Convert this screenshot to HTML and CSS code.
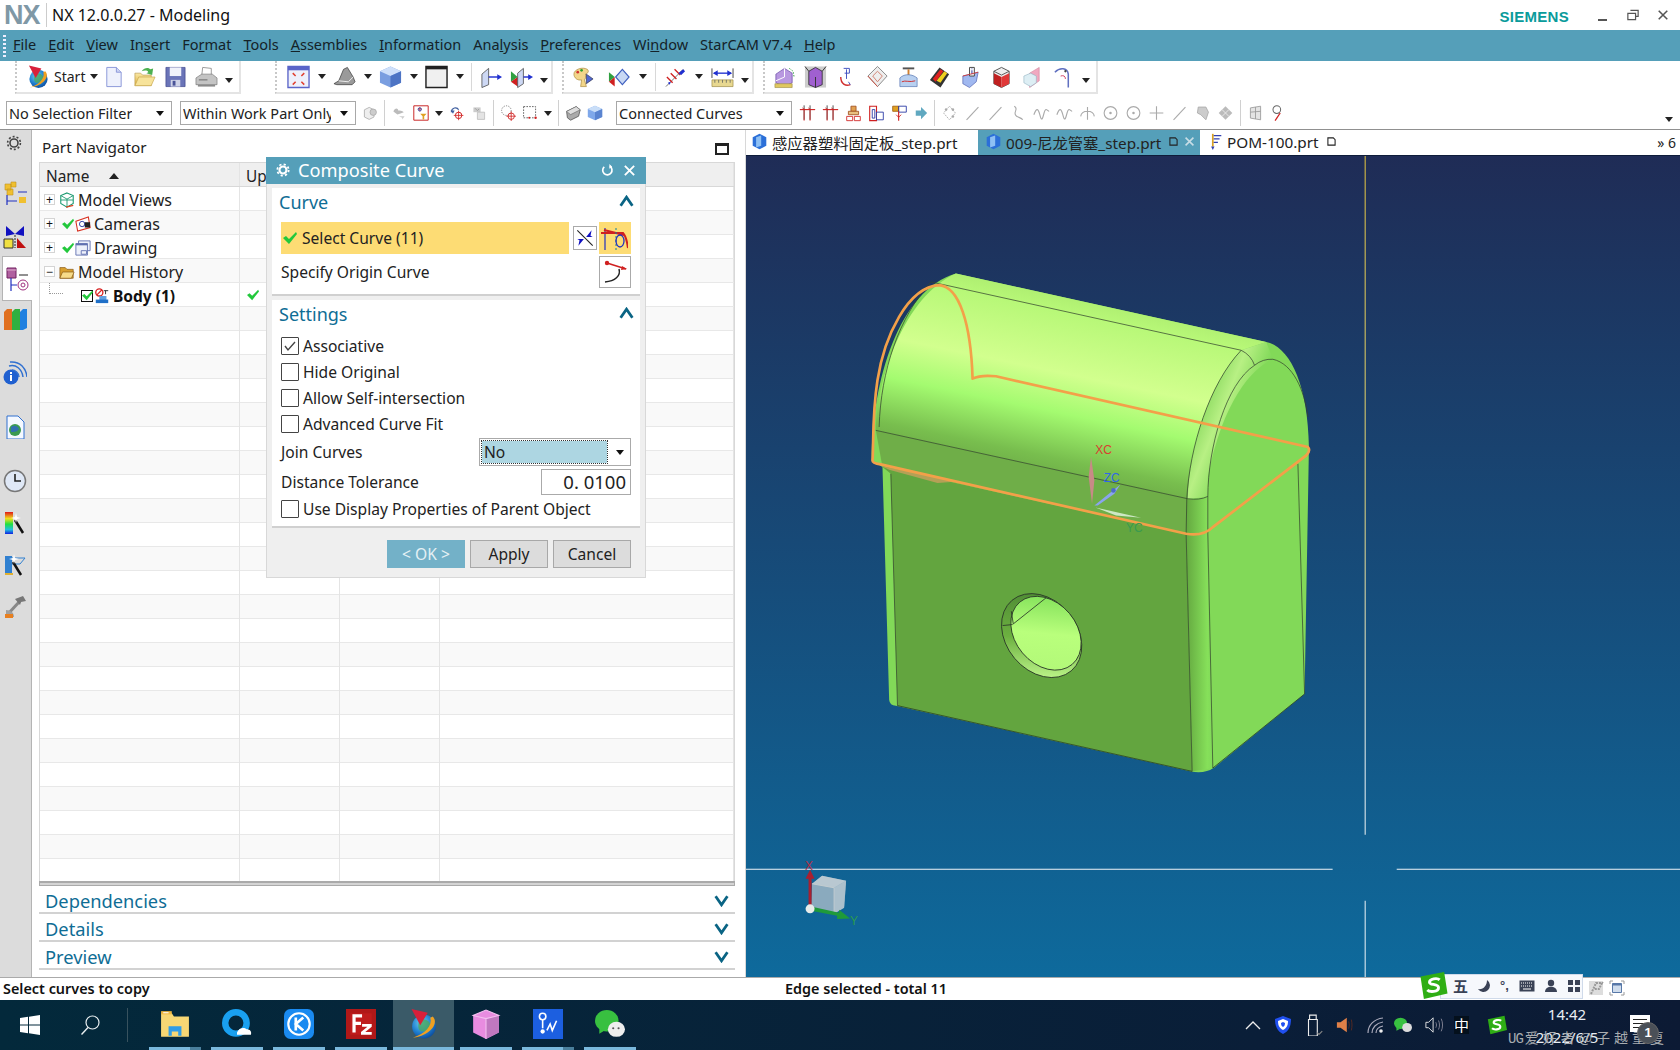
FILE: index.html
```html
<!DOCTYPE html>
<html lang="en">
<head>
<meta charset="utf-8">
<title>NX 12.0.0.27 - Modeling</title>
<link rel="stylesheet" href="styles.css">
</head>
<body>
<svg class="defs" width="0" height="0">
<defs>
<linearGradient id="gBlue" x1="0" y1="0" x2="1" y2="1"><stop offset="0" stop-color="#dfe6fb"/><stop offset="1" stop-color="#6f86d8"/></linearGradient>
<linearGradient id="gGold" x1="0" y1="0" x2="0" y2="1"><stop offset="0" stop-color="#fbe9a6"/><stop offset="1" stop-color="#dcae3c"/></linearGradient>
<radialGradient id="gGlobe" cx=".4" cy=".35" r=".7"><stop offset="0" stop-color="#6fd0f0"/><stop offset=".6" stop-color="#1f7fd0"/><stop offset="1" stop-color="#0c4a9a"/></radialGradient>
<linearGradient id="gRainbow" x1="0" y1="0" x2="0" y2="1"><stop offset="0" stop-color="#e01818"/><stop offset=".3" stop-color="#f0e020"/><stop offset=".55" stop-color="#20e040"/><stop offset=".8" stop-color="#20c0e0"/><stop offset="1" stop-color="#1020e0"/></linearGradient>
<symbol id="globe" viewBox="0 0 24 24"><circle cx="12" cy="14" r="9.500" fill="url(#gGlobe)"/><path d="M8 9c3-2 8 0 9 3s-2 6-6 6-4-4-3-9z" fill="#4aa860" opacity=".8"/><path d="M19 6c5 5-1 15-16 17 10-3 16-10 14-16z" fill="#f0a020"/><path d="M2 0l13 3-6 10z" fill="#d8203a"/></symbol>
<symbol id="doc" viewBox="0 0 24 24"><path d="M5 2h10l5 5v15H5z" fill="#eef1fc" stroke="#8a96d8"/><path d="M15 2v5h5" fill="#cdd5f4" stroke="#8a96d8"/></symbol>
<symbol id="open" viewBox="0 0 24 24"><path d="M2 21V8h6l2 2h9v11z" fill="url(#gGold)" stroke="#b89a50" stroke-width=".7"/><path d="M2 21l4-9h17l-4 9z" fill="#f7e39a" stroke="#c8a850" stroke-width=".7"/><path d="M9 6c3-4 7-4 9-2l3-1-1 7-6-2 2-1c-1-2-4-2-7-1z" fill="#4cb050"/></symbol>
<symbol id="save" viewBox="0 0 24 24"><path d="M2 2h20v20H2z" fill="#6a74b8" stroke="#3c4488" stroke-width=".7"/><path d="M6 2h12v9H6z" fill="#f0f2fa"/><path d="M7 15h10v7H7z" fill="#cfd3e8"/><path d="M9 16h3v5H9z" fill="#4a5498"/></symbol>
<symbol id="print" viewBox="0 0 24 24"><path d="M8 2l9 1v8H7z" fill="#fff" stroke="#999"/><path d="M1 13l6-4h11l5 4v7H1z" fill="#c4c4c4" stroke="#777" stroke-width=".7"/><path d="M3 20h18v2H3z" fill="#8a8a8a"/><path d="M4 15h9" stroke="#666"/></symbol>
<symbol id="fit" viewBox="0 0 24 24"><path d="M1 1h22v22H1z" fill="#eef0fb" stroke="#5a64c8" stroke-width="1.400"/><path d="M1 1h22v4H1z" fill="#5a64c8"/><path d="M6 8l3 3M18 8l-3 3M6 20l3-3M18 20l-3-3" stroke="#e04030" stroke-width="1.600"/></symbol>
<symbol id="shade" viewBox="0 0 24 24"><path d="M1 19l5-3 5-12 4-2 6 10 2 5-3 3H4z" fill="#9a9a9a" stroke="#444" stroke-width=".8"/><path d="M6 16l10 1 5-5" stroke="#eee" fill="none"/></symbol>
<symbol id="cube" viewBox="0 0 24 24"><path d="M12 1l11 5v12l-11 5-11-5V6z" fill="#7a9ee0"/><path d="M1 6l11 5 11-5-11-5z" fill="#cfe0fa"/><path d="M12 11v12l11-5V6z" fill="#4d74c4"/></symbol>
<symbol id="win" viewBox="0 0 24 24"><path d="M1 1h22v22H1z" fill="#f0f0f0" stroke="#222" stroke-width="1.500"/><path d="M1 1h22v3H1z" fill="#222"/></symbol>
<symbol id="plane" viewBox="0 0 24 24"><path d="M2 9l7-6v17l-7 3z" fill="#cdd8f4" stroke="#444" stroke-width=".8"/><path d="M9 12h12" stroke="#2030d0" stroke-width="1.500"/><path d="M23 12l-5-3v6z" fill="#2030d0"/></symbol>
<symbol id="plane2" viewBox="0 0 24 24"><path d="M1 6l7 6-7 5z" fill="#30a040"/><path d="M1 17l7-5v10z" fill="#d02020"/><path d="M8 8l6-5v16l-6 4z" fill="#cdd8f4" stroke="#444" stroke-width=".8"/><path d="M14 12h8" stroke="#2030d0" stroke-width="1.500"/><path d="M24 12l-5-3v6z" fill="#2030d0"/></symbol>
<symbol id="palette" viewBox="0 0 24 24"><path d="M2 9c0-5 9-8 14-5 2 2 1 4-2 5 1 2 0 5-1 6l2 7H9l1-7c-4 1-8-2-8-6z" fill="#f2d68a" stroke="#a8873c" stroke-width=".7"/><circle cx="6" cy="7" r="1.400" fill="#d03030"/><circle cx="10" cy="5" r="1.400" fill="#30a030"/><path d="M15 9l7 5-7 5z" fill="#5068d0" stroke="#223" stroke-width=".6"/></symbol>
<symbol id="wcsv" viewBox="0 0 24 24"><path d="M1 7l6 5-6 5z" fill="#30a040"/><path d="M1 17l6-5v10z" fill="#d02020"/><path d="M8 12l7-8 7 8-7 8z" fill="#c8d8f4" stroke="#4060c0" stroke-width="1.200"/></symbol>
<symbol id="wcs" viewBox="0 0 24 24"><path d="M2 22L20 4" stroke="#333" stroke-width=".7"/><path d="M3 12l6 6M7 8l6 6M11 4l6 6" stroke="#d02020" stroke-width="1.400"/><path d="M15 8l5-4 2 2-4 4z" fill="#2030d0"/><path d="M4 18l3-1-1 3z" fill="#2030d0"/></symbol>
<symbol id="ruler" viewBox="0 0 24 24"><path d="M1 3v10M23 3v10" stroke="#444"/><path d="M3 8h18" stroke="#2030d0" stroke-width="1.400"/><path d="M2 8l5-3v6zM22 8l-5-3v6z" fill="#2030d0"/><path d="M1 15h22v7H1z" fill="#e8d890" stroke="#9a8840" stroke-width=".7"/><path d="M4 15v3M8 15v3M12 15v3M16 15v3M20 15v3" stroke="#776"/></symbol>
<symbol id="a1" viewBox="0 0 24 24"><path d="M3 9l9-6 8 5v10l-8 4-9-4z" fill="#b898e0" stroke="#6040a0" stroke-width=".7"/><path d="M12 3v9l-9 4" stroke="#fff" fill="none"/><path d="M17 3l4 3 1 6" stroke="#30a040" stroke-dasharray="1.500 1.500" fill="none"/><path d="M2 19h18v4H2z" fill="#e0c860" stroke="#9a8840" stroke-width=".6"/></symbol>
<symbol id="a2" viewBox="0 0 24 24"><path d="M1 1h22v22H1z" fill="#ccc"/><path d="M5 6l7-4 7 4v14l-7 3-7-3z" fill="#a060d0" stroke="#222" stroke-width=".8"/><path d="M1 1l4 5M23 1l-4 5M12 23v-11" stroke="#333"/></symbol>
<symbol id="a3" viewBox="0 0 24 24"><path d="M6 12c0 7 5 10 10 8" stroke="#d03030" stroke-width="1.500" fill="none"/><path d="M12 14V4M16 20l-2-3" stroke="#4050c0" fill="none"/><path d="M9 3h6v5h-5" stroke="#4050c0" fill="none"/></symbol>
<symbol id="a4" viewBox="0 0 24 24"><path d="M12 1l10 10-10 11L2 11z" fill="#eee" stroke="#888"/><path d="M12 6l5 5-5 6-5-6z" fill="none" stroke="#d08070"/><path d="M2 11l10 11" stroke="#d05040"/></symbol>
<symbol id="a5" viewBox="0 0 24 24"><path d="M6 2h12v2H6z" fill="#555"/><path d="M12 4v7" stroke="#d08030" stroke-width="2"/><path d="M3 13c5-5 13-4 18 0v9H3z" fill="#b8d0f0" stroke="#5070b0" stroke-width=".7"/><path d="M5 17c4-2 8 1 14-1" stroke="#d03030" fill="none"/></symbol>
<symbol id="a6" viewBox="0 0 24 24"><path d="M2 15L12 2l10 7-9 14z" fill="#333"/><path d="M5 14l8-10 3 2-8 11z" fill="#e02020"/><path d="M9 16l8-10 3 2-7 10z" fill="#f0d020"/></symbol>
<symbol id="a7" viewBox="0 0 24 24"><path d="M4 11l16-4-2 10-7 6-7-4z" fill="#a0b8f0" stroke="#5060b0" stroke-width=".7"/><path d="M11 2h5v9h-5z" fill="#fff" stroke="#444"/><path d="M13 3h1v1h-1zM13 5h1v4h-1z" fill="#2030a0"/><path d="M4 11l16-4" stroke="#d04040"/></symbol>
<symbol id="a8" viewBox="0 0 24 24"><path d="M4 6l8-4 8 4v13l-8 4-8-4z" fill="#eee" stroke="#555"/><path d="M4 8l8 4v11l-8-4z" fill="#c02020"/><path d="M12 12l8-4v11l-8 4z" fill="#e03838"/><path d="M4 6l8 4 8-4" stroke="#555" fill="none"/></symbol>
<symbol id="a9" viewBox="0 0 24 24"><path d="M9 8l10-6v14L9 23z" fill="#f0a8c0" stroke="#d08098" stroke-width=".6"/><path d="M3 11l7-3 6 3v7l-6 4-7-4z" fill="#ddeef4" stroke="#90b0c0" stroke-width=".6"/></symbol>
<symbol id="a10" viewBox="0 0 24 24"><path d="M3 7c5-5 13-5 14 2v14" stroke="#6070c0" stroke-width="1.600" fill="none"/><path d="M9 11c3-1 5 0 5 3" stroke="#d04060" fill="none"/><circle cx="14" cy="6" r="1.200" fill="#444"/></symbol>
<symbol id="g1" viewBox="0 0 20 20"><path d="M3 6l6-3 6 3v9l-6 3-6-3z" fill="#eee" stroke="#aaa"/><circle cx="14" cy="9" r="4" fill="#ccc" stroke="#aaa"/></symbol>
<symbol id="g2" viewBox="0 0 20 20"><path d="M3 8c2-5 6-4 6-1 2 0 5 0 7 2l-5 2-3 1z" fill="#bbb"/><path d="M10 14h7l-3 4v-2z" fill="#ccc"/></symbol>
<symbol id="filt" viewBox="0 0 20 20"><path d="M1 1h18v18H1z" fill="#fff" stroke="#c82020" stroke-width="1.200"/><path d="M6 5h5M8.500 3v5" stroke="#c03030"/><circle cx="8.500" cy="5.500" r="2" fill="none" stroke="#2030a0"/><path d="M9 11h8l-3 3v4h-2v-4z" fill="#e0a020"/></symbol>
<symbol id="tgt" viewBox="0 0 20 20"><path d="M3 9c0-6 7-7 9-3" stroke="#4060a0" stroke-width="1.600" fill="none"/><path d="M2 7l3 4 2-4z" fill="#4060a0"/><circle cx="12" cy="13" r="4" fill="none" stroke="#d02020" stroke-width="1.200"/><path d="M12 7v12M6 13h12" stroke="#d02020"/></symbol>
<symbol id="g3" viewBox="0 0 20 20"><path d="M3 3h9v6H3z" fill="#ccc"/><path d="M8 9h9v9H8z" fill="#e4e4e4" stroke="#bbb"/><path d="M5 4l3 3 2-2" stroke="#999" fill="none"/></symbol>
<symbol id="circt" viewBox="0 0 20 20"><circle cx="8" cy="7" r="6" fill="none" stroke="#666" stroke-dasharray="1.500 1.500"/><circle cx="14" cy="14" r="4" fill="none" stroke="#d02020" stroke-width="1.100"/><path d="M14 8v12M8 14h12" stroke="#d02020"/></symbol>
<symbol id="rectd" viewBox="0 0 20 20"><path d="M2 2h15v14H2z" fill="none" stroke="#444" stroke-dasharray="2 1.500"/><circle cx="17" cy="16" r="1.500" fill="#d02020"/><circle cx="9" cy="16" r="1.200" fill="#d02020"/></symbol>
<symbol id="sh1" viewBox="0 0 20 20"><path d="M2 8l12-6 5 4-2 8-10 5-4-3z" fill="#aaa" stroke="#555"/><path d="M2 8l12-6 5 4-12 6z" fill="#ddd" stroke="#555" stroke-width=".6"/></symbol>
<symbol id="sh2" viewBox="0 0 20 20"><path d="M10 1l9 4v10l-9 4-9-4V5z" fill="#7fa8ea"/><path d="M1 5l9 4 9-4-9-4z" fill="#c9def8"/><path d="M10 9v10l9-4V5z" fill="#5a84d0"/></symbol>
<symbol id="rr" viewBox="0 0 20 20"><path d="M6 1v17M13 1v17" stroke="#333"/><path d="M1 6h18" stroke="#d02020" stroke-width="1.300"/><path d="M4 4c1 1 2 1 3 2M11 4c1 1 2 1 3 2" stroke="#d02020"/><path d="M6 6v13M13 6v13" stroke="#d02020"/></symbol>
<symbol id="rs" viewBox="0 0 20 20"><path d="M7 2h6v6H7z" fill="#e0a050" stroke="#a05020"/><path d="M4 8h12v4H4z" fill="#e8c080" stroke="#a05020"/><path d="M2 14h7v5H2zM11 14h7v5h-7z" fill="none" stroke="#d02020"/></symbol>
<symbol id="rb" viewBox="0 0 20 20"><path d="M2 2h8v17H2z" fill="#fff" stroke="#d02020" stroke-width="1.300"/><path d="M5 6h3v10H5z" fill="none" stroke="#2030a0"/><path d="M10 9h8v9h-8z" fill="#fff" stroke="#2030a0"/></symbol>
<symbol id="rl" viewBox="0 0 20 20"><path d="M2 2h7v6H2z" fill="#e0a020" stroke="#a06010"/><path d="M9 2h9v7H9z" fill="none" stroke="#2030a0"/><path d="M9 8v11" stroke="#d02020" stroke-width="1.300"/><path d="M6 12l3 3 3-3" fill="none" stroke="#d02020"/></symbol>
<symbol id="arr" viewBox="0 0 16 16"><path d="M2 5h6V1l7 7-7 7v-4H2z" fill="#60a8c0"/></symbol>
<symbol id="gs" viewBox="0 0 20 20"><path d="M10 2l7 8-7 8-7-8z" fill="none" stroke="#aaa" stroke-dasharray="2 1"/><circle cx="6" cy="6" r="1.500" fill="#aaa"/><circle cx="14" cy="14" r="1.500" fill="#aaa"/><circle cx="14" cy="6" r="1.500" fill="#aaa"/></symbol>
<symbol id="gl" viewBox="0 0 20 20"><path d="M3 18L17 3" stroke="#aaa" stroke-width="1.300"/></symbol>
<symbol id="gw" viewBox="0 0 20 20"><path d="M5 2c6 3-2 7 2 11 3 3 6 2 8 5" fill="none" stroke="#aaa" stroke-width="1.300"/></symbol>
<symbol id="gv" viewBox="0 0 20 20"><path d="M1 12c3-8 5-8 7 0s3 6 5-2 4-2 6-2" fill="none" stroke="#aaa" stroke-width="1.300"/></symbol>
<symbol id="gt" viewBox="0 0 20 20"><path d="M2 14c1-8 15-8 16 0M10 3v15" fill="none" stroke="#aaa" stroke-width="1.300"/></symbol>
<symbol id="gc" viewBox="0 0 20 20"><circle cx="10" cy="10" r="7.500" fill="none" stroke="#aaa" stroke-width="1.300"/><circle cx="10" cy="10" r="1.500" fill="#aaa"/></symbol>
<symbol id="gp" viewBox="0 0 20 20"><path d="M10 2v16M2 10h16" stroke="#aaa" stroke-width="1.300"/></symbol>
<symbol id="gq" viewBox="0 0 20 20"><path d="M5 3h9l3 6-3 9-6-6-4-2z" fill="#ccc" stroke="#aaa"/></symbol>
<symbol id="gd" viewBox="0 0 20 20"><path d="M10 2l8 8-8 8-8-8z" fill="#bbb"/><path d="M6 6l8 8M14 6l-8 8" stroke="#eee"/></symbol>
<symbol id="gb" viewBox="0 0 20 20"><path d="M4 4l12-2v16L4 16z" fill="#e4e4e4" stroke="#999"/><path d="M4 9l12-1M10 3v14" stroke="#999"/></symbol>
<symbol id="gr" viewBox="0 0 20 20"><circle cx="8" cy="6" r="4.500" fill="none" stroke="#666" stroke-width="1.200"/><path d="M12 10L6 19" stroke="#d02020" stroke-width="1.500"/></symbol>
<symbol id="solid" viewBox="0 0 20 20"><path d="M10 1l8 4v10l-8 4-8-4V5z" fill="#2b6fd8"/><path d="M6 5l6-2v12l-6 2z" fill="#8ec0f4"/></symbol>
<symbol id="chk" viewBox="0 0 16 14"><path d="M1 7l3-2 3 3 7-7 1 2-8 10z" fill="#22c83c"/></symbol>
<symbol id="cl" viewBox="0 0 14 14"><path d="M2 2l10 10M12 2L2 12" stroke="#555" stroke-width="1.800"/></symbol>
</defs>
</svg>

<header class="titlebar">
  <span class="logo">NX</span>
  <span class="logosep"></span>
  <span class="title">NX 12.0.0.27 - Modeling</span>
  <span class="siemens">SIEMENS</span>
  <span class="winctl"><span class="minbtn"></span>
    <svg class="ctl" viewBox="0 0 14 14"><path d="M4 1.500h9v7H10M1 5h9v7.500H1z" fill="none" stroke="#555" stroke-width="1.400"/></svg>
    <svg class="ctl"><use href="#cl"/></svg></span>
</header>

<nav class="menubar">
  <span class="grip"></span>
  <span class="m"><u>F</u>ile</span><span class="m"><u>E</u>dit</span><span class="m"><u>V</u>iew</span><span class="m">In<u>s</u>ert</span><span class="m">Fo<u>r</u>mat</span><span class="m"><u>T</u>ools</span><span class="m"><u>A</u>ssemblies</span><span class="m"><u>I</u>nformation</span><span class="m">Ana<u>l</u>ysis</span><span class="m"><u>P</u>references</span><span class="m">Wi<u>n</u>dow</span><span class="m">StarCAM V7.4</span><span class="m"><u>H</u>elp</span>
</nav>

<div class="toolbar">
  <div class="tgroup g1">
    <svg class="i"><use href="#globe"/></svg><span class="start">Start</span><i class="caret tight"></i>
    <svg class="i first"><use href="#doc"/></svg><svg class="i"><use href="#open"/></svg><svg class="i"><use href="#save"/></svg><svg class="i"><use href="#print"/></svg><i class="caret low"></i>
  </div>
  <div class="tgroup g2">
    <svg class="i"><use href="#fit"/></svg><i class="caret"></i><svg class="i"><use href="#shade"/></svg><i class="caret"></i><svg class="i"><use href="#cube"/></svg><i class="caret"></i><svg class="i"><use href="#win"/></svg><i class="caret"></i><span class="vsep"></span><svg class="i"><use href="#plane"/></svg><svg class="i"><use href="#plane2"/></svg><i class="caret low"></i>
  </div>
  <div class="tgroup g3">
    <svg class="i pal"><use href="#palette"/></svg><svg class="i"><use href="#wcsv"/></svg><i class="caret"></i><span class="vsep"></span><svg class="i"><use href="#wcs"/></svg><i class="caret"></i><svg class="i"><use href="#ruler"/></svg><i class="caret low"></i>
  </div>
  <div class="tgroup g4">
    <svg class="i"><use href="#a1"/></svg><svg class="i"><use href="#a2"/></svg><svg class="i"><use href="#a3"/></svg><svg class="i"><use href="#a4"/></svg><svg class="i"><use href="#a5"/></svg><svg class="i"><use href="#a6"/></svg><svg class="i"><use href="#a7"/></svg><svg class="i"><use href="#a8"/></svg><svg class="i"><use href="#a9"/></svg><svg class="i"><use href="#a10"/></svg><i class="caret low"></i>
  </div>
</div>

<div class="selbar">
  <div class="combo c1"><span class="cv">No Selection Filter</span><i class="caret dk"></i></div>
  <div class="combo c2"><span class="cv">Within Work Part Only</span><i class="caret dk"></i></div>
  <svg class="s"><use href="#g1"/></svg><span class="vsep2"></span>
  <svg class="s"><use href="#g2"/></svg><svg class="s"><use href="#filt"/></svg><i class="caret"></i><svg class="s"><use href="#tgt"/></svg><svg class="s"><use href="#g3"/></svg><span class="vsep2"></span>
  <svg class="s"><use href="#circt"/></svg><svg class="s"><use href="#rectd"/></svg><i class="caret"></i><span class="vsep2"></span>
  <svg class="s"><use href="#sh1"/></svg><svg class="s"><use href="#sh2"/></svg>
  <div class="combo c3"><span class="cv">Connected Curves</span><i class="caret dk"></i></div>
  <svg class="s"><use href="#rr"/></svg><svg class="s"><use href="#rr"/></svg><svg class="s"><use href="#rs"/></svg><svg class="s"><use href="#rb"/></svg><svg class="s"><use href="#rl"/></svg><svg class="s sm"><use href="#arr"/></svg><span class="vsep2"></span>
  <svg class="s"><use href="#gs"/></svg><svg class="s"><use href="#gl"/></svg><svg class="s"><use href="#gl"/></svg><svg class="s"><use href="#gw"/></svg><svg class="s"><use href="#gv"/></svg><svg class="s"><use href="#gv"/></svg><svg class="s"><use href="#gt"/></svg><svg class="s"><use href="#gc"/></svg><svg class="s"><use href="#gc"/></svg><svg class="s"><use href="#gp"/></svg><svg class="s"><use href="#gl"/></svg><svg class="s"><use href="#gq"/></svg><svg class="s"><use href="#gd"/></svg><span class="vsep2"></span>
  <svg class="s"><use href="#gb"/></svg><svg class="s"><use href="#gr"/></svg>
  <i class="caret end"></i>
</div>

<main class="main">
  <aside class="strip">
    <svg class="sg" viewBox="0 0 20 20"><circle cx="10" cy="10" r="5" fill="none" stroke="#444" stroke-width="2"/><circle cx="10" cy="10" r="8" fill="none" stroke="#444" stroke-width="2" stroke-dasharray="2.500 2.500"/></svg>
    <svg class="si near" viewBox="0 0 24 24"><path d="M2 3h6v6H2zM8 1h5v5H8zM4 8h6v6H4z" fill="#f0c030" stroke="#c09020" stroke-width=".6"/><path d="M4 14v10M4 20h10M15 11h9" stroke="#2030c0" stroke-width="1.200"/><path d="M16 16h7v6h-7z" fill="#f0c030"/></svg>
    <svg class="si" viewBox="0 0 24 24"><path d="M3 1l9 8 9-8v10l-9-2-9 2z" fill="#1010c0"/><path d="M12 10v13" stroke="#222" stroke-dasharray="2 1"/><path d="M1 14h9v9H1z" fill="#f0e040" stroke="#333"/><path d="M14 23V13l9 10z" fill="#c01010"/></svg>
    <div class="stab"><svg class="si" viewBox="0 0 24 24"><path d="M2 1h9v10H2z" fill="#b060a0" stroke="#702060"/><path d="M2 3h9" stroke="#e0b0d0"/><path d="M6 11v13M6 18h6" stroke="#2030c0" stroke-width="1.200"/><path d="M14 8h9" stroke="#222"/><circle cx="18" cy="18" r="5" fill="none" stroke="#a03080"/><circle cx="18" cy="18" r="2" fill="none" stroke="#a03080"/></svg></div>
    <svg class="si far" viewBox="0 0 24 24"><path d="M1 5l3-3h5v21H1z" fill="#e07020"/><path d="M9 5l3-3h5v21H9z" fill="#30b040"/><path d="M17 5l3-3h4v19l-4 2h-3z" fill="#2080e0"/></svg>
    <svg class="si far" viewBox="0 0 24 24"><circle cx="8" cy="16" r="7.500" fill="#2060d0"/><path d="M7 11h2v2H7zM7 14h2v6H7z" fill="#fff"/><path d="M6 5c7-2 13 3 14 11M7 1c10-1 16 6 17 15M9 9c3 0 7 3 7 7" fill="none" stroke="#3070d0" stroke-width="1.500"/></svg>
    <svg class="si far" viewBox="0 0 24 24"><path d="M4 1h11l6 6v17H4z" fill="#f4f8ff" stroke="#3070d0"/><circle cx="12" cy="15" r="6" fill="#3a9a50"/><path d="M8 12c3-2 6-2 8 2-2 3-5 3-8 3z" fill="#3070b0"/></svg>
    <svg class="si" viewBox="0 0 24 24"><circle cx="12" cy="12" r="10.500" fill="#dfe8f6" stroke="#777" stroke-width="1.500"/><path d="M12 5v7h6" stroke="#222" stroke-width="1.600" fill="none"/></svg>
    <svg class="si" viewBox="0 0 24 24"><path d="M2 1h8v22H2z" fill="url(#gRainbow)"/><path d="M12 9l8 13" stroke="#111" stroke-width="2.500"/><path d="M12 6l1-4 1 4 4 1-4 1-1 4-1-4-4-1z" fill="#fff"/></svg>
    <svg class="si" viewBox="0 0 24 24"><path d="M2 3h7v18H2z" fill="#3080d0"/><path d="M9 5h13l-5 6h-8" fill="none" stroke="#3080d0"/><path d="M10 9l8 13" stroke="#111" stroke-width="2.500"/><path d="M10 5l1-4 1 4 4 1-4 1-1 4-1-4-4-1z" fill="#fff"/><path d="M2 21h8" stroke="#e0b030" stroke-width="2"/></svg>
    <svg class="si" viewBox="0 0 24 24"><path d="M4 20L17 6" stroke="#888" stroke-width="3"/><path d="M12 4l8-3 3 5-5 1-1 3z" fill="#777"/><path d="M3 15c5 0 8 3 8 7H3z" fill="#a0a0a0"/><path d="M2 19h8v4H2z" fill="#e88020"/></svg>
  </aside>

  <section class="nav">
    <div class="navhead"><span class="navtitle">Part Navigator</span><span class="navpin"></span></div>
    <div class="table">
      <div class="row head"><span class="cell namecell">Name<i class="sortup"></i></span><span class="cell">Up</span><span class="cell"></span><span class="cell"></span></div>
      <div class="row"><span class="cell namecell tree"><b class="box">+</b><svg class="ti" viewBox="0 0 18 18"><path d="M9 1l7 3v9l-7 4-7-4V4z" fill="none" stroke="#1a9a70" stroke-width="1.200"/><path d="M2 4l7 4 7-4M9 8v9M2 9h14" stroke="#1a9a70" fill="none"/><path d="M8 17l8-2" stroke="#e04020" stroke-width="1.300"/></svg>Model Views</span><span class="cell"></span><span class="cell"></span><span class="cell"></span></div>
      <div class="row alt"><span class="cell namecell tree"><b class="box">+</b><svg class="ck"><use href="#chk"/></svg><svg class="ti" viewBox="0 0 18 18"><path d="M1 6l14-5 2 12-14 4z" fill="#fff" stroke="#d83020" stroke-width="1.200"/><circle cx="8" cy="9" r="3" fill="none" stroke="#2030a0"/><path d="M11 7h6v6h-6z" fill="#222"/></svg>Cameras</span><span class="cell"></span><span class="cell"></span><span class="cell"></span></div>
      <div class="row"><span class="cell namecell tree"><b class="box">+</b><svg class="ck"><use href="#chk"/></svg><svg class="ti" viewBox="0 0 18 18"><path d="M4 1h13v11H4z" fill="#eef1fb" stroke="#6070b0"/><path d="M1 4h13v13H1z" fill="#eef1fb" stroke="#6070b0"/><path d="M1 4h13v2H1z" fill="#6070b0"/><path d="M7 12h6v4H7z" fill="none" stroke="#6070b0"/></svg>Drawing</span><span class="cell"></span><span class="cell"></span><span class="cell"></span></div>
      <div class="row alt"><span class="cell namecell tree"><b class="box">&#8722;</b><svg class="ti" viewBox="0 0 18 18"><path d="M1 16V4h6l2 2h7v10z" fill="#d8a030" stroke="#805010" stroke-width=".7"/><path d="M1 16l3-7h13l-3 7z" fill="#f7dc8a" stroke="#805010" stroke-width=".7"/></svg>Model History</span><span class="cell"></span><span class="cell"></span><span class="cell"></span></div>
      <div class="row"><span class="cell namecell tree body"><i class="dots"></i><span class="tick"><svg class="ck2"><use href="#chk"/></svg></span><svg class="ti" viewBox="0 0 18 18"><circle cx="6" cy="5" r="4" fill="none" stroke="#d82020" stroke-width="1.500"/><path d="M3 8l6-6" stroke="#d82020" stroke-width="1.300"/><path d="M11 3h5M13 3v4" stroke="#222"/><path d="M6 9h8v5H6z" fill="#60a0e0"/><path d="M2 13h14v4H2z" fill="#2070c8"/></svg>Body (1)</span><span class="cell"><svg class="ck"><use href="#chk"/></svg></span><span class="cell"></span><span class="cell"></span></div>
      <div class="filler"><span></span><span></span><span></span><span></span></div>
    </div>
    <div class="splitter"></div>
    <div class="fold"><span>Dependencies</span><svg class="chev" viewBox="0 0 14 12"><path d="M1.500 2L7 10l5.500-8" fill="none" stroke="#0a6484" stroke-width="2.600"/></svg></div>
    <div class="fold"><span>Details</span><svg class="chev" viewBox="0 0 14 12"><path d="M1.500 2L7 10l5.500-8" fill="none" stroke="#0a6484" stroke-width="2.600"/></svg></div>
    <div class="fold"><span>Preview</span><svg class="chev" viewBox="0 0 14 12"><path d="M1.500 2L7 10l5.500-8" fill="none" stroke="#0a6484" stroke-width="2.600"/></svg></div>
  </section>

  <section class="work">
    <div class="tabs">
      <div class="tab t1"><svg class="tabi"><use href="#solid"/></svg><span>感应器塑料固定板_step.prt</span></div>
      <div class="tab t2"><svg class="tabi"><use href="#solid"/></svg><span>009-尼龙管塞_step.prt</span><svg class="mini" viewBox="0 0 10 10"><path d="M1 1h6l2 2v6H1z" fill="none" stroke="#222" stroke-width="1.200"/></svg><svg class="tabx" viewBox="0 0 14 14"><path d="M2 2l10 10M12 2L2 12" stroke="#c8dde6" stroke-width="2"/></svg></div>
      <div class="tab t3"><svg class="tabi" viewBox="0 0 20 20"><path d="M7 1h2v15H7z" fill="#d8a020"/><path d="M9 3h9M9 7h7M9 11h5" stroke="#3040b0" stroke-width="1.500"/><path d="M6 16h4l-2 4z" fill="#3040b0"/></svg><span>POM-100.prt</span><svg class="mini" viewBox="0 0 10 10"><path d="M1 1h6l2 2v6H1z" fill="none" stroke="#222" stroke-width="1.200"/></svg></div>
      <span class="more">&raquo; 6</span>
    </div>
    <div class="canvas">
      <svg class="scene" viewBox="747 156 933 820">
        <defs>
          <linearGradient id="cross" gradientUnits="userSpaceOnUse" x1="0" y1="156" x2="0" y2="834"><stop offset="0" stop-color="#e6c63e"/><stop offset=".5" stop-color="#e6d878"/><stop offset=".9" stop-color="#f0f4f4"/></linearGradient>
          <linearGradient id="roof" gradientUnits="userSpaceOnUse" x1="520" y1="640" x2="640" y2="60"><stop offset="0" stop-color="#6caa46"/><stop offset=".12" stop-color="#78be4e"/><stop offset=".35" stop-color="#a4fb70"/><stop offset=".55" stop-color="#d2ff8e"/><stop offset=".85" stop-color="#b8f878"/><stop offset="1" stop-color="#a8e86c"/></linearGradient>
          <linearGradient id="cham" gradientUnits="userSpaceOnUse" x1="1040" y1="500" x2="1190" y2="560"><stop offset="0" stop-color="#7fd456"/><stop offset=".5" stop-color="#b8f084"/><stop offset="1" stop-color="#80d858"/></linearGradient>
          <linearGradient id="chamd" gradientUnits="userSpaceOnUse" x1="1040" y1="0" x2="1120" y2="0"><stop offset="0" stop-color="#64a840"/><stop offset=".8" stop-color="#86e05a"/><stop offset="1" stop-color="#80d858"/></linearGradient>
          <linearGradient id="hole" gradientUnits="userSpaceOnUse" x1="530" y1="1040" x2="700" y2="1210"><stop offset="0" stop-color="#82e05a"/><stop offset=".5" stop-color="#b9ff7c"/><stop offset="1" stop-color="#b2f878"/></linearGradient>
          <linearGradient id="holer" gradientUnits="userSpaceOnUse" x1="500" y1="1040" x2="710" y2="1230"><stop offset="0" stop-color="#4e8a34"/><stop offset=".5" stop-color="#6cb040"/><stop offset="1" stop-color="#c8ff94"/></linearGradient>
        </defs>
        <path class="crossy" d="M1365.500 156V834"/>
        <path class="crossw" d="M1365.500 900V976M747 868.500H1333M1397 868.500H1680"/>
        <g transform="translate(840 260) scale(.33333)">
          <path d="M150 1318L130 620 98 600C98 360 180 90 350 40L1280 245C1350 260 1405 370 1408 560L1395 1300 1125 1520Q1095 1540 1055 1532L170 1335Q152 1335 150 1318Z" fill="#82d958"/>
          <path d="M110 510C115 350 195 110 350 40L1280 245 1205 270C1110 370 1050 560 1045 715Z" fill="url(#roof)"/>
          <path d="M1045 715C1050 560 1110 370 1205 270L1280 245 1300 297C1240 320 1150 420 1105 650V710Z" fill="url(#cham)"/>
          <path d="M130 620L110 510 1045 715 1040 820Z" fill="#6fae48"/>
          <path d="M130 620L1040 820 1058 1532 175 1335 155 640Z" fill="#63a53f"/>
          <path d="M1040 716Q1075 720 1105 710L1105 820 1120 1522 1058 1532 1040 820Z" fill="url(#chamd)"/>
          <g fill="none" stroke="#34432f" stroke-width="2.200">
            <path d="M155 640L175 1335M110 510L1045 715Q1080 720 1105 708M120 500C125 330 180 170 275 65M275 65L1205 270M1205 270C1110 370 1050 560 1042 715L1040 820 1058 1532"/>
            <path d="M1105 710C1105 560 1160 370 1245 315M1205 270Q1235 285 1245 315M1245 315Q1270 295 1300 297C1360 310 1395 390 1405 470M1105 710L1105 820 1120 1522M1375 610L1395 1300"/>
            <path d="M175 1335L1058 1532 M1120 1522L1395 1300" stroke="#22301f"/>
          </g>
          <ellipse cx="607" cy="1125" rx="138" ry="106" transform="rotate(50 607 1125)" fill="url(#holer)" stroke="#2c3a28" stroke-width="2.600"/>
          <ellipse cx="620" cy="1118" rx="122" ry="92" transform="rotate(50 620 1118)" fill="url(#hole)" stroke="#2c3a28" stroke-width="2.600"/>
          <path d="M522 1090L620 1012M490 1095L520 1092M516 1052L522 1090" stroke="#2c3a28" stroke-width="2.600" fill="none"/>
          <path d="M130 618L300 650 345 664 295 668 150 628Z" fill="#b5a056"/>
          <path d="M100 600C104 560 98 470 115 360 135 230 205 80 300 75 360 80 395 190 400 355 420 345 440 345 470 348L1405 560Q1414 570 1400 585L1120 800C1100 820 1070 825 1040 820L125 612Q100 608 100 600Z" fill="none" stroke="#f3a049" stroke-width="8" stroke-linejoin="round"/>
          <path d="M755 588L765 660 758 730 748 650Z" fill="#c88a86"/>
          <path d="M765 735L843 672 825 700 775 735Z" fill="#8aa4ee"/>
          <circle cx="822" cy="690" r="7" fill="#4d6cc8"/>
          <path d="M768 741L905 772 830 765Z" fill="#cde8c4"/>
          <text class="axis xc" x="768" y="582">XC</text>
          <text class="axis zc" x="793" y="665">ZC</text>
          <text class="axis yc" x="860" y="815">YC</text>
        </g>
        <g>
          <path d="M813 883L823 875 847 880 845 907 835 913 812 907Z" fill="#a9bcc8" opacity=".8"/>
          <path d="M813 883L823 875 847 880 835 887Z" fill="#c4d0d6" opacity=".8"/>
          <path d="M835 887L847 880 845 907 835 913Z" fill="#b4c6d0" opacity=".8"/>
          <path d="M835 887V913M813 883L835 887" stroke="#c2ccd0" fill="none"/>
          <path d="M809.500 905V878h-3l4.500-9 4.500 9h-3v27z" fill="#a82030"/>
          <path d="M813 906L840 912 840 909 851 917.500 838 918 838 915 812 910Z" fill="#1f9a3a"/>
          <circle cx="811" cy="908" r="4.500" fill="#e8ecea"/>
          <text class="tri trx" x="806" y="869">X</text>
          <text class="tri try" x="851" y="924">Y</text>
        </g>
      </svg>
    </div>
  </section>
</main>

<footer class="status">
  <b class="cue">Select curves to copy</b>
  <b class="stat">Edge selected - total 11</b>
  <svg class="flag" viewBox="0 0 16 16"><path d="M1 1h14v14H1z" fill="#ddd"/><path d="M3 14L8 3h6l-3 6h-5" fill="none" stroke="#999" stroke-dasharray="2 1" stroke-width="2"/></svg>
  <svg class="scr" viewBox="0 0 16 16"><path d="M1 4V1h3M12 1h3v3M15 12v3h-3M4 15H1v-3" fill="none" stroke="#999"/><path d="M3.500 3.500h9v9h-9z" fill="#cfdcec" stroke="#5878a8"/><path d="M3.500 3.500h9v2h-9z" fill="#5878a8"/></svg>
</footer>

<footer class="taskbar">
  <svg class="tb win" viewBox="0 0 20 20"><path d="M0 3l8-1.200V9.500H0zM9 1.700L20 0v9.500H9zM0 10.500h8v7.700l-8-1.200zM9 10.500h11V20L9 18.300z" fill="#fff"/></svg>
  <svg class="tb search" viewBox="0 0 20 20"><circle cx="12.500" cy="7.500" r="6.500" fill="none" stroke="#e8eef0" stroke-width="1.200"/><path d="M8 12.500L1.500 19.500" stroke="#e8eef0" stroke-width="1.400"/></svg>
  <span class="tbsep"></span>
  <div class="app u2"><svg class="ta" viewBox="0 0 28 28"><path d="M1 4h10l2 3h14v19H1z" fill="#f7d774"/><path d="M1 2h10v3H1z" fill="#f0b840"/><path d="M3 3h5v1H3z" fill="#fff"/><path d="M8 16h12v9h-3v-4h-6v4H8z" fill="#2f9ce8"/></svg></div>
  <div class="app"><svg class="ta" viewBox="0 0 28 28"><circle cx="13" cy="13" r="10" fill="none" stroke="#19a0f0" stroke-width="6"/><path d="M14 22c2-5 7-5 9-3 3 0 5 2 4 5H14z" fill="#fff"/></svg></div>
  <div class="app"><svg class="ta" viewBox="0 0 28 28"><rect x="0" width="28" height="28" rx="6" fill="#1a8af0"/><circle cx="14" cy="14" r="10" fill="none" stroke="#fff" stroke-width="2"/><path d="M11 8v12M18 8l-7 6 7 6" fill="none" stroke="#fff" stroke-width="2.500"/></svg></div>
  <div class="app"><svg class="ta" viewBox="0 0 28 28"><path d="M0 0h28v28H0z" fill="#b01818"/><path d="M4 4h20v20H4z" fill="#bf1c1c"/><path d="M6 22V5h9v3H9v4h5v3H9v7zM15 14h9v2.500l-6 5h6V24H14v-2.500l6-5h-5z" fill="#fff"/></svg></div>
  <div class="app active"><svg class="ta" viewBox="0 0 24 24"><use href="#globe"/></svg></div>
  <div class="app"><svg class="ta" viewBox="0 0 28 28"><path d="M14 1l12 5v16l-12 6-12-6V6z" fill="#e88ce0"/><path d="M14 9L26 6v16l-12 6z" fill="#c078c0"/><path d="M2 6l12 3 12-3-12-5zM14 9v19" fill="none" stroke="#f4c0f0"/></svg></div>
  <div class="app u2"><svg class="ta" viewBox="0 0 28 28"><path d="M0 0h28v28H0z" fill="#1c5fe0"/><circle cx="9" cy="7" r="3" fill="none" stroke="#fff" stroke-width="1.500"/><path d="M9 10v8" stroke="#fff" stroke-width="1.500"/><circle cx="9" cy="21" r="2" fill="#fff"/><path d="M13 20l3-6 2 6 4-9" fill="none" stroke="#fff" stroke-width="1.500"/></svg></div>
  <div class="app"><svg class="ta" viewBox="0 0 28 28"><ellipse cx="11" cy="11" rx="11" ry="10" fill="#38c040"/><path d="M4 18l0 5 5-3z" fill="#38c040"/><ellipse cx="20" cy="19" rx="8" ry="7" fill="#eee"/><circle cx="17" cy="18" r="1" fill="#555"/><circle cx="22" cy="18" r="1" fill="#555"/></svg></div>
  <div class="tray">
    <svg class="tr caretup" viewBox="0 0 16 10"><path d="M1 9l7-7 7 7" fill="none" stroke="#eee" stroke-width="1.300"/></svg>
    <svg class="tr" viewBox="0 0 18 20"><path d="M9 1l8 3c0 7-2 12-8 15C3 16 1 11 1 4z" fill="#2050f0"/><path d="M9 4l5 2c0 4-1 7-5 9-4-2-5-5-5-9z" fill="#fff"/><path d="M9 7l2 1c0 2-.5 3-2 4-1.500-1-2-2-2-4z" fill="#2050f0"/></svg>
    <svg class="tr" viewBox="0 0 16 20"><path d="M3 5h8v15H3zM4 1h6v4H4z" fill="none" stroke="#eee"/><path d="M11 17l1.500 1.500 3-3" fill="none" stroke="#888"/></svg>
    <svg class="tr" viewBox="0 0 20 20"><path d="M1 7h4l7-5v16l-7-5H1z" fill="#e08048"/><path d="M14 6c1 3 1 5 0 8M17 4c1 4 1 8 0 12" fill="none" stroke="#5a2a20"/></svg>
    <svg class="tr" viewBox="0 0 18 18"><path d="M1 17c0-8 6-14 15-15M5 17c0-5 4-10 11-11M9 17c0-3 2-6 7-7" fill="none" stroke="#aab" stroke-width="1.200"/><circle cx="14" cy="15" r="1.800" fill="#eee"/></svg>
    <svg class="tr trw" viewBox="0 0 22 20"><ellipse cx="8" cy="8" rx="8" ry="7" fill="#38c040"/><path d="M3 13v4l4-2z" fill="#38c040"/><ellipse cx="16" cy="13" rx="6" ry="5.500" fill="#ddd"/></svg>
    <svg class="tr" viewBox="0 0 20 20"><path d="M1 7h3l5-5v16l-5-5H1z" fill="none" stroke="#eee"/><path d="M12 7c1 2 1 4 0 6M15 5c1.500 3 1.500 7 0 10M18 3c2 4 2 10 0 14" fill="none" stroke="#889"/></svg>
    <span class="zh">中</span>
    <svg class="tr s3" viewBox="0 0 24 24"><path d="M1 5L21 1l3 17-20 5z" fill="#2fae14"/><path d="M17 7c-2-2-9-1-9 2s8 1 8 5-8 4-10 2" fill="none" stroke="#fff" stroke-width="2.500"/></svg>
  </div>
  <div class="clock"><span class="time">14:42</span><span class="date">2022/6/5</span></div>
  <span class="wm"><span class="wmug">UG</span>爱好者@子越重复</span>
  <span class="note"><i></i><i></i><i></i></span>
  <span class="badge">1</span>
</footer>

<div class="ime">
  <svg class="imes" viewBox="0 0 24 24"><path d="M0 4L21 0l3 19-21 5z" fill="#2fae14"/><path d="M17 7c-2-2-9-1-9 2s8 1 8 5-8 4-10 2" fill="none" stroke="#fff" stroke-width="2.600"/></svg>
  <span class="imet">五</span>
  <svg class="imei" viewBox="0 0 14 14"><path d="M10 1a6.500 6.500 0 1 1-9 9c5 1 9-3 9-9z" fill="#3a4256"/></svg>
  <span class="imep">°,</span>
  <svg class="imek" viewBox="0 0 16 12"><path d="M.5.500h15v11H.5z" fill="#3a4256"/><path d="M2 3h12M2 6h12" stroke="#fff" stroke-dasharray="1 1"/><path d="M4 9h8" stroke="#fff"/></svg>
  <svg class="imei" viewBox="0 0 14 14"><circle cx="7" cy="4" r="3.200" fill="#3a4256"/><path d="M1 13c0-7 12-7 12 0z" fill="#3a4256"/></svg>
  <svg class="imei" viewBox="0 0 14 14"><path d="M1 1h5v5H1zM8 1h5v5H8zM1 8h5v5H1zM8 8h5v5H8z" fill="#3a4256"/></svg>
</div>

<div class="dialog">
  <div class="dtitle">
    <svg class="dgear" viewBox="0 0 16 16"><circle cx="8" cy="8" r="4" fill="none" stroke="#fff" stroke-width="2.500"/><circle cx="8" cy="8" r="6.500" fill="none" stroke="#fff" stroke-width="2" stroke-dasharray="2.500 2.600"/></svg>
    <span class="dname">Composite Curve</span>
    <svg class="dbtn" viewBox="0 0 14 14"><path d="M3.500 3a5 5 0 1 0 6-.5" fill="none" stroke="#fff" stroke-width="1.800"/><path d="M9 0v5l3-2z" fill="#fff"/></svg>
    <svg class="dbtn" viewBox="0 0 14 14"><path d="M2 2l10 10M12 2L2 12" stroke="#fff" stroke-width="2"/></svg>
  </div>
  <div class="dbody">
    <section class="panel curve">
      <div class="phead"><span>Curve</span><svg class="chev" viewBox="0 0 14 12"><path d="M1.500 10L7 2l5.500 8" fill="none" stroke="#0a6484" stroke-width="2.600"/></svg></div>
      <div class="selrow">
        <div class="selfield"><svg class="ck"><use href="#chk"/></svg><span>Select Curve (11)</span></div>
        <button class="smallb"><svg viewBox="0 0 20 20" class="sbi"><path d="M3 3l14 14" stroke="#222"/><path d="M11 9l5-6-1 5 2 1zM9 11l-5 6 1-5-2-1z" fill="#1010c0"/></svg></button>
        <button class="pickb"><svg viewBox="0 0 28 28" class="pbi"><path d="M5 26V4" stroke="#2030c0" stroke-width="1.200"/><path d="M4 6l20 5M1 9h22c3 3 4 8 5 15" fill="none" stroke="#d02020" stroke-width="2"/><path d="M16 4v22" stroke="#1080a0" stroke-dasharray="2 2"/><ellipse cx="20" cy="17" rx="4" ry="6" fill="none" stroke="#2030c0" stroke-width="1.300"/></svg></button>
      </div>
      <div class="origrow"><span>Specify Origin Curve</span><button class="origb"><svg viewBox="0 0 28 28" class="pbi"><path d="M4 24c10-1 16-6 14-13" fill="none" stroke="#222" stroke-width="1.500"/><path d="M6 5l19 6" stroke="#d02020" stroke-width="1.500"/><circle cx="6" cy="5" r="2.200" fill="#d02020"/><path d="M26 11l-6 1 1-4z" fill="#d02020"/></svg></button></div>
    </section>
    <section class="panel settings">
      <div class="phead"><span>Settings</span><svg class="chev" viewBox="0 0 14 12"><path d="M1.500 10L7 2l5.500 8" fill="none" stroke="#0a6484" stroke-width="2.600"/></svg></div>
      <label class="cb"><span class="cbox"><svg viewBox="0 0 16 16"><path d="M3 8l3 4 7-8" fill="none" stroke="#444" stroke-width="1.400"/></svg></span>Associative</label>
      <label class="cb"><span class="cbox"></span>Hide Original</label>
      <label class="cb"><span class="cbox"></span>Allow Self-intersection</label>
      <label class="cb"><span class="cbox"></span>Advanced Curve Fit</label>
      <div class="frow join"><span>Join Curves</span><div class="jcombo"><span class="jval">No</span><i class="caret dk"></i></div></div>
      <div class="frow dist"><span>Distance Tolerance</span><div class="dval">0. 0100</div></div>
      <label class="cb lastcb"><span class="cbox"></span>Use Display Properties of Parent Object</label>
    </section>
    <div class="dfoot"><button class="ok">&lt; OK &gt;</button><button class="btn">Apply</button><button class="btn">Cancel</button></div>
  </div>
</div>
</body>
</html>
```

FILE: styles.css
```css
* { box-sizing: border-box; }
html, body { margin: 0; padding: 0; }
body {
  width: 1680px; height: 1050px; overflow: hidden; position: relative;
  display: flex; flex-direction: column; background: #fff;
  font-family: "Noto Sans", "Noto Sans CJK SC", sans-serif; font-size: 15px; color: #222;
}
svg { display: block; flex: none; }
.defs { position: absolute; }
button { font: inherit; padding: 0; }

/* title bar */
.titlebar { height: 30px; flex: none; display: flex; align-items: center; background: #fff; }
.logo { margin-left: 4px; width: 38px; font: bold 27px/30px "Liberation Sans", sans-serif; letter-spacing: -1px; color: #7f98a6; }
.logosep { width: 1px; height: 24px; background: #ccc; margin-left: 4px; }
.title { margin-left: 5px; font-size: 16px; color: #111; }
.siemens { margin-left: auto; margin-top: 2px; font: bold 15px "Liberation Sans", sans-serif; letter-spacing: .3px; color: #0a9b9b; }
.winctl { display: flex; align-items: center; gap: 18px; margin-left: 29px; margin-right: 11px; }
.minbtn { width: 9px; height: 2px; background: #555; margin-top: 9px; margin-right: 2px; }
.ctl { width: 12px; height: 12px; }

/* menu */
.menubar { height: 31px; flex: none; display: flex; align-items: center; padding-bottom: 3px; background: #559fb9; color: #142228; font-size: 14.500px; }
.grip { width: 3px; height: 22px; margin-top: 3px; margin-left: 3px; margin-right: 7px; background: repeating-linear-gradient(#eef 0 2px, transparent 2px 4px); }
.m { margin-right: 12px; white-space: nowrap; }
.m u { text-decoration-thickness: 1px; }

/* toolbars */
.toolbar { height: 36px; flex: none; display: flex; align-items: stretch; background: #fff; }
.tgroup { display: flex; align-items: center; gap: 8px; height: 33px; border-bottom: 2px solid #e4e4e4; border-right: 2px solid #e4e4e4; border-left: 2px dotted #c8c8c8; }
.g1 { margin-left: 15px; width: 226px; padding-left: 10px; }
.g2 { margin-left: 34px; width: 278px; padding-left: 10px; gap: 7.500px; }
.g3 { margin-left: 9px; width: 192px; padding-left: 8px; }
.g4 { margin-left: 9px; width: 335px; padding-left: 8px; gap: 8px; }
.i { width: 23px; height: 24px; }
.pal { margin-right: 5px; }
.first { margin-left: -4px; }
.start { margin-left: -4px; color: #222; font-size: 14px; }
.tight { margin-left: -3px; }
.caret { display: block; flex: none; width: 0; height: 0; border-left: 4.500px solid transparent; border-right: 4.500px solid transparent; border-top: 5px solid #222; }
.low { margin-top: 8px; margin-left: -1px; }
.vsep { width: 1px; height: 28px; background: #d8d8d8; }
.vsep2 { width: 1px; height: 26px; background: #d0d0d0; }

.selbar { height: 33px; flex: none; display: flex; align-items: center; gap: 6px; padding-left: 6px; background: #fff; border-bottom: 1px solid #909090; }
.combo { height: 24px; border: 1px solid #a8a8a8; display: flex; align-items: center; justify-content: space-between; padding: 0 7px 0 2px; background: #fff; overflow: hidden; font-size: 14.500px; color: #222; white-space: nowrap; }
.cv { overflow: hidden; }
.c1 { width: 166px; margin-right: 2px; }
.c2 { width: 176px; }
.c3 { width: 176px; margin-left: 7px; margin-right: 1px; }
.c2 .cv { width: 148px; }
.s { width: 16px; height: 18px; }
.c3 ~ .s { width: 17px; }
.c3 ~ .sm { width: 14px; height: 14px; }
.dk { border-top-color: #111; }
.end { margin-left: auto; margin-right: 7px; margin-top: 12px; }

/* main */
.main { flex: 1; min-height: 0; display: flex; }
.strip { width: 32px; flex: none; background: #dcdcdc; border-right: 1px solid #b4b4b4; display: flex; flex-direction: column; align-items: center; padding-top: 5px; }
.sg { width: 16px; height: 16px; margin-bottom: 30px; margin-left: -4px; }
.si { width: 24px; height: 24px; margin-bottom: 18px; margin-left: -2px; }
.near { margin-bottom: 20px; }
.far { margin-bottom: 30px; }
.stab { width: 30px; height: 45px; margin-left: 2px; margin-bottom: 6px; margin-top: -11px; background: #fff; border: 1px solid #b4b4b4; border-right: 0; display: flex; align-items: center; justify-content: center; }
.stab .si { margin: 0; }

.nav { width: 714px; flex: none; display: flex; flex-direction: column; padding: 0 10px 7px 7px; background: #fff; border-right: 1px solid #d8d8d8; }
.navhead { height: 32px; flex: none; display: flex; align-items: center; justify-content: space-between; padding-left: 3px; padding-top: 1px; }
.navtitle { font-size: 15.300px; color: #222; }
.navpin { width: 14px; height: 12px; border: 2px solid #222; border-top-width: 3px; margin-right: 6px; margin-top: 4px; }
.table { flex: 1; min-height: 0; display: flex; flex-direction: column; border: 1px solid #d8d8d8; border-bottom: 0; }
.row { height: 24px; flex: none; display: grid; grid-template-columns: 200px 100px 100px 1fr; border-bottom: 1px solid #e8e8e8; background: #fff; }
.alt { background: #f9f9f9; }
.head { background: #efefef; border-bottom: 1px solid #d8d8d8; font-size: 15.400px; }
.head .cell { padding-top: 3px; }
.cell { border-right: 1px solid #e4e4e4; display: flex; align-items: center; padding-left: 6px; white-space: nowrap; color: #222; overflow: hidden; }
.sortup { width: 0; height: 0; border-left: 5.500px solid transparent; border-right: 5.500px solid transparent; border-bottom: 6px solid #222; margin-left: 20px; }
.tree { padding-left: 4px; padding-top: 2px; position: relative; font-size: 16px; }
.box { width: 11px; height: 11px; border: 1px solid #d4d4d4; display: flex; align-items: center; justify-content: center; font: 12px/1 "Liberation Sans", sans-serif; color: #111; margin-right: 4px; flex: none; background: #fff; }
.ti { width: 16px; height: 18px; margin-right: 3px; }
.ck { width: 14px; height: 12px; }
.tree .ck { margin-left: 2px; }
.ck2 { width: 13px; height: 11px; }
.dots { position: absolute; left: 9px; top: -6px; width: 14px; height: 17px; border-left: 1px dotted #999; border-bottom: 1px dotted #999; }
.tree.body { font-weight: 700; padding-left: 41px; color: #111; font-size: 15.500px; }
.tick { width: 12px; height: 12px; border: 1px solid #111; margin-right: 1px; display: flex; align-items: center; justify-content: center; flex: none; background: #fff; }
.filler { flex: 1; min-height: 0; display: grid; grid-template-columns: 200px 100px 100px 1fr; background: repeating-linear-gradient(#f9f9f9 0 23px, #e8e8e8 23px 24px, #fff 24px 47px, #e8e8e8 47px 48px); }
.filler span { border-right: 1px solid #e4e4e4; }
.splitter { height: 5px; flex: none; background: #d4d4d4; border: 1px solid #aaa; border-width: 2px 1px 1px; }
.fold { height: 28px; flex: none; display: flex; align-items: center; justify-content: space-between; padding: 2px 6px 0 6px; border-bottom: 2px solid #d2d2d2; color: #0f6d95; font-size: 18.300px; }
.chev { width: 15px; height: 13px; }

/* work area */
.work { flex: 1; min-width: 0; display: flex; flex-direction: column; background: #fff; }
.tabs { height: 25px; flex: none; display: flex; align-items: stretch; font-size: 15.300px; color: #222; }
.tab { display: flex; align-items: center; gap: 4px; padding-left: 5px; padding-bottom: 2px; white-space: nowrap; }
.t1 { width: 232px; }
.t2 { width: 222px; background: #559fb9; padding-left: 7px; }
.t3 { padding-left: 6px; }
.tabi { width: 17px; height: 17px; }
.mini { width: 9px; height: 9px; margin-left: 4px; }
.tabx { width: 11px; height: 11px; margin-left: 2px; }
.more { margin-left: auto; margin-right: 4px; align-self: center; font-size: 14px; }
.canvas { flex: 1; min-height: 0; background: linear-gradient(#1f2c56, #0e6a9c); border-top: 1px solid #0e1c3a; }
.scene { width: 100%; height: 100%; }
.crossy { stroke: url(#cross); stroke-width: 1; fill: none; }
.crossw { stroke: #eef4f8; stroke-width: 1; fill: none; }
.axis { font: 36px "Liberation Sans", sans-serif; }
.xc { fill: #d84030; }
.zc { fill: #2f68e8; }
.yc { fill: #3a9a50; }
.tri { font: 12px "Liberation Sans", sans-serif; }
.trx { fill: #b03048; }
.try { fill: #2a9a50; }

/* status */
.status { height: 23px; flex: none; display: flex; align-items: center; background: #fff; border-top: 1px solid #aaa; font-size: 14.400px; color: #111; padding: 0 0 2px 3px; }
.cue { font-weight: 600; width: 782px; }
.stat { font-weight: 600; }
.flag { width: 16px; height: 16px; margin-left: auto; }
.scr { width: 16px; height: 16px; margin-left: 5px; margin-right: 55px; }

/* taskbar */
.taskbar { height: 50px; flex: none; display: flex; align-items: center; position: relative; background: linear-gradient(90deg, #03293b, #0a1e38 75%, #0c1a34); color: #fff; }
.win { width: 20px; height: 20px; margin-left: 20px; }
.search { width: 20px; height: 20px; margin-left: 40px; }
.tbsep { width: 1px; height: 34px; background: #38525e; margin-left: 27px; margin-right: 21px; }
.app { width: 52px; height: 50px; margin-right: 10px; display: flex; align-items: center; justify-content: center; position: relative; border-bottom: 3px solid #7ab8dc; flex: none; }
.u2 { border-image: linear-gradient(90deg, #7ab8dc 78%, #4a7f9c 78%) 1; }
.app.active { width: 61px; margin: 0 6px 0 -4px; background: #3a5a68; }
.ta { width: 30px; height: 30px; }
.tray { position: absolute; left: 1245px; top: 14px; display: flex; align-items: center; gap: 13px; }
.tr { width: 18px; height: 22px; }
.trw { margin-left: -4px; }
.caretup { width: 16px; height: 10px; }
.zh { font-size: 15px; color: #fff; background: #04101c; width: 15px; line-height: 18px; text-align: center; margin-left: -2px; }
.s3 { width: 20px; height: 20px; margin-left: 5px; }
.clock { position: absolute; left: 1530px; top: 4px; width: 74px; display: flex; flex-direction: column; align-items: center; font-size: 15px; line-height: 21px; color: #e8eef4; }
.date { margin-top: 2px; }
.wm { position: absolute; left: 1508px; top: 27px; width: 172px; font: 14px/20px "Noto Sans CJK SC", sans-serif; letter-spacing: 4px; color: #a8acb0; white-space: nowrap; overflow: hidden; }
.wmug { font: 14px/20px "Liberation Mono", monospace; letter-spacing: -1px; margin-right: 2px; }
.note { position: absolute; left: 1630px; top: 15px; width: 20px; height: 17px; background: #fff; display: flex; flex-direction: column; justify-content: center; gap: 3px; padding: 0 3px; }
.note i { height: 1px; background: #222; }
.badge { position: absolute; left: 1637px; top: 22px; width: 22px; height: 22px; border-radius: 50%; background: #4a5058; color: #fff; font: bold 13px/20px "Liberation Sans", sans-serif; text-align: center; border: 1px solid #666; }

/* IME bar, over the status bar */
.ime { position: absolute; left: 1420px; top: 972px; width: 163px; height: 27px; padding-left: 33px; display: flex; align-items: center; gap: 9px; z-index: 3; }
.ime::before { content: ""; position: absolute; left: 20px; top: 2px; right: 0; bottom: 0; background: #f6f8fc; border: 1px solid #cfdaea; z-index: -1; }
.imes { position: absolute; left: 0; top: 0; width: 28px; height: 27px; }
.imet { font: bold 15px "Noto Sans CJK SC", sans-serif; color: #3a4256; }
.imei { width: 14px; height: 14px; }
.imep { font: bold 13px "Liberation Sans", sans-serif; color: #3a4256; padding-right: 1px; }
.imek { width: 16px; height: 12px; }

/* dialog */
.dialog { position: absolute; left: 266px; top: 157px; width: 380px; height: 421px; display: flex; flex-direction: column; z-index: 5; font-size: 15.600px; }
.dtitle { height: 27px; flex: none; display: flex; align-items: center; background: #559fb9; color: #fff; padding: 0 10px 1px 10px; gap: 9px; }
.dgear { width: 14px; height: 14px; }
.dname { flex: 1; font-size: 18.200px; margin-left: -1px; }
.dbtn { width: 13px; height: 13px; }
.dbody { flex: 1; background: #efefef; border: 1px solid #d8d8d8; border-top: 0; padding: 4px 5px 0; display: flex; flex-direction: column; }
.panel { background: #fff; border-bottom: 2px solid #d0d0d0; padding: 0 9px; }
.curve { height: 108px; margin-bottom: 4px; }
.settings { height: 228px; }
.phead { height: 30px; display: flex; align-items: center; justify-content: space-between; color: #0f6d95; font-size: 18px; margin-bottom: 4px; margin-left: -2px; margin-right: -3px; padding-bottom: 3px; }
.curve .selrow { display: flex; align-items: center; }
.selfield { width: 288px; height: 32px; background: #fddc74; display: flex; align-items: center; padding-left: 1px; gap: 4px; }
.selfield .ck { width: 16px; height: 14px; }
.smallb { width: 24px; height: 24px; margin-left: 4px; background: #fff; border: 1px solid #aaa; }
.sbi { width: 22px; height: 22px; }
.pickb { width: 32px; height: 32px; margin-left: 2px; background: #fddc74; border: 0; }
.pbi { width: 28px; height: 28px; margin: 1px; }
.origrow { display: flex; align-items: center; justify-content: space-between; height: 34px; margin-top: 1px; }
.origb { width: 32px; height: 32px; background: #fff; border: 1px solid #aaa; }
.cb { height: 26px; display: flex; align-items: center; gap: 4px; }
.settings .phead { margin-bottom: 3px; }
.cbox { width: 18px; height: 18px; border: 1px solid #444; border-radius: 1px; flex: none; background: #fff; }
.frow { display: flex; align-items: center; justify-content: space-between; }
.join { height: 28px; margin-top: 1px; }
.jcombo { width: 152px; height: 28px; border: 1px solid #aaa; display: flex; align-items: center; padding: 2px 6px 2px 2px; justify-content: space-between; }
.jval { width: 125px; height: 22px; background: #add6e2; outline: 1px dotted #333; display: flex; align-items: center; padding-left: 2px; }
.dist { height: 27px; margin-top: 2px; }
.dval { width: 90px; height: 26px; border: 1px solid #aaa; text-align: right; padding-right: 4px; font-size: 18.500px; line-height: 23px; }
.lastcb { height: 27px; }
.dfoot { flex: 1; display: flex; justify-content: flex-end; gap: 5px; padding: 12px 9px 0 0; }
.dfoot button { width: 78px; height: 28px; font-size: 15.600px; }
.ok { background: #73b1c8; color: #e4f0f4; border: 0; }
.btn { background: #dcdcdc; border: 1px solid #a8a8a8; color: #222; }
```
